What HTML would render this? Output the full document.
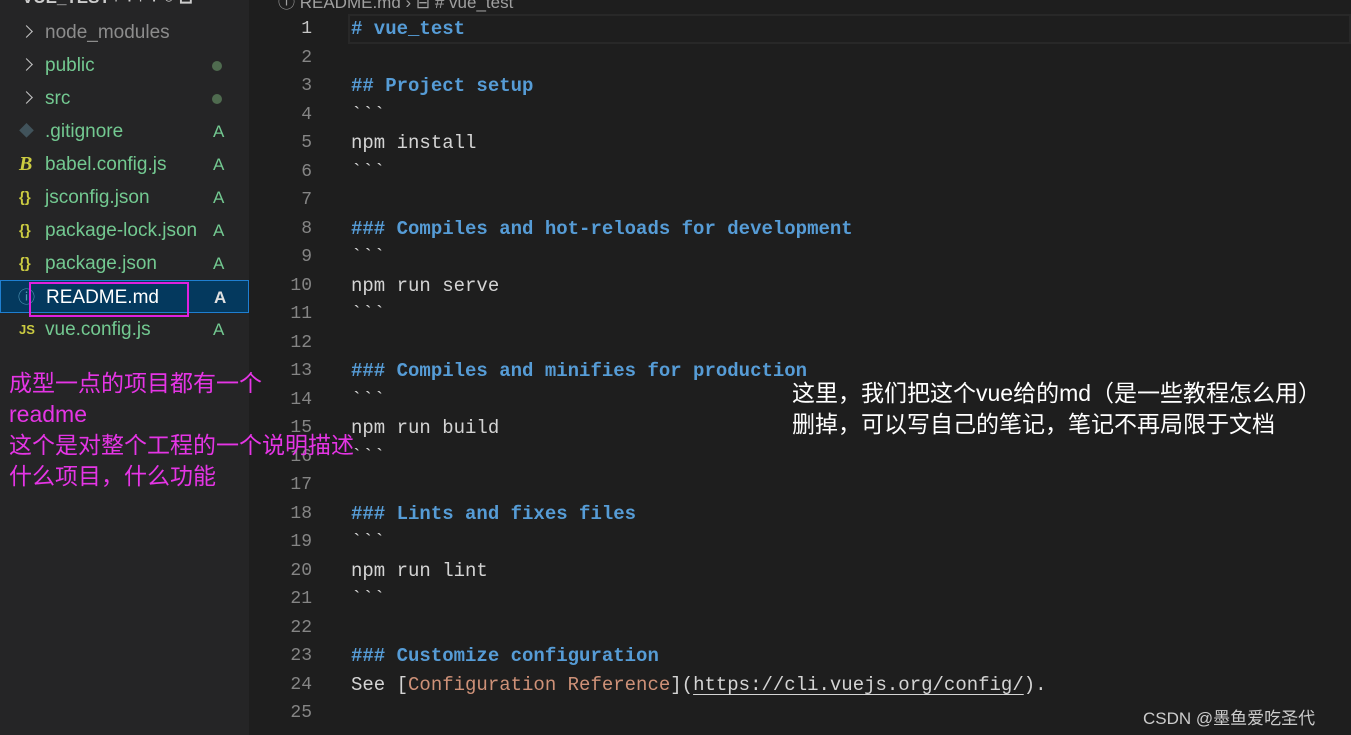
<!DOCTYPE html>
<html><head><meta charset="utf-8"><style>
*{margin:0;padding:0;box-sizing:border-box}
body{width:1351px;height:735px;overflow:hidden;background:#1e1e1e;position:relative;font-family:"Liberation Sans","Noto Sans CJK SC",sans-serif}
#side{position:absolute;left:0;top:0;width:249px;height:735px;background:#252526}
.row{position:absolute;left:0;width:249px;height:33px;font-size:19px;line-height:33px;color:#73c991}
.row .n{position:absolute;left:45px}
.row .b{position:absolute;left:213px;font-size:17px}
.row .d{position:absolute;left:212px;top:12px;width:10px;height:10px;border-radius:50%;background:#4f6b4f}
.row .i{position:absolute;left:19px;font-size:15px;font-weight:bold;color:#cbcb41}
.chev{position:absolute;left:22px;top:11px;width:9px;height:9px;border-right:1.5px solid #c5c5c5;border-top:1.5px solid #c5c5c5;transform:rotate(45deg)}
.ln{position:absolute;left:260px;width:52px;text-align:right;font-family:"Liberation Mono",monospace;font-size:18px;color:#858585;line-height:24px}
.cd{position:absolute;left:351px;font-family:"Liberation Mono",monospace;font-size:19px;color:#d4d4d4;white-space:pre;line-height:24px}
.h{color:#569cd6;font-weight:bold}
.ann{position:absolute;font-size:23px;line-height:31px;white-space:nowrap}
</style></head><body>
<div id="side">
<div style="position:absolute;left:22px;top:-12px;font-size:17px;font-weight:bold;color:#ccc">VUE_TEST ⌐+ ⌐+ ○ ⊟</div>
<div class="row" style="top:16px;color:#8c8c8c"><span class="chev"></span><span class="n">node_modules</span></div>
<div class="row" style="top:49px"><span class="chev"></span><span class="n">public</span><span class="d"></span></div>
<div class="row" style="top:82px"><span class="chev"></span><span class="n">src</span><span class="d"></span></div>
<div class="row" style="top:115px"><span class="i" style="color:#41535b">◆</span><span class="n">.gitignore</span><span class="b">A</span></div>
<div class="row" style="top:148px"><span class="i" style="font-style:italic;font-family:'Liberation Serif',serif;font-size:20px">B</span><span class="n">babel.config.js</span><span class="b">A</span></div>
<div class="row" style="top:181px"><span class="i">{}</span><span class="n">jsconfig.json</span><span class="b">A</span></div>
<div class="row" style="top:214px"><span class="i">{}</span><span class="n">package-lock.json</span><span class="b">A</span></div>
<div class="row" style="top:247px"><span class="i">{}</span><span class="n">package.json</span><span class="b">A</span></div>
<div class="row" style="top:280px;background:#04395e;border:1px solid #1f7fd1;color:#fff"><span class="i" style="color:#519aba;font-weight:normal;font-size:17px;left:17px">ⓘ</span><span class="n">README.md</span><span class="b" style="color:#e0e0e0;font-weight:bold">A</span></div>
<div style="position:absolute;left:29px;top:282px;width:160px;height:35px;border:2px solid #e020e0"></div>
<div class="row" style="top:313px"><span class="i" style="font-size:13px">JS</span><span class="n">vue.config.js</span><span class="b">A</span></div>
</div>
<div style="position:absolute;left:278px;top:-12px;font-size:17px;color:#a0a0a0">ⓘ README.md › ⊟ # vue_test</div>
<div style="position:absolute;left:348px;top:14px;width:1003px;height:30px;border:2px solid #282828"></div>

<div class="ln" style="top:17px;color:#c6c6c6">1</div><div class="cd" style="top:17px"><span class="h"># vue_test</span></div>
<div class="ln" style="top:46px">2</div>
<div class="ln" style="top:74px">3</div><div class="cd" style="top:74px"><span class="h">## Project setup</span></div>
<div class="ln" style="top:103px">4</div><div class="cd" style="top:103px">&#96;&#96;&#96;</div>
<div class="ln" style="top:131px">5</div><div class="cd" style="top:131px">npm install</div>
<div class="ln" style="top:160px">6</div><div class="cd" style="top:160px">&#96;&#96;&#96;</div>
<div class="ln" style="top:188px">7</div>
<div class="ln" style="top:217px">8</div><div class="cd" style="top:217px"><span class="h">### Compiles and hot-reloads for development</span></div>
<div class="ln" style="top:245px">9</div><div class="cd" style="top:245px">&#96;&#96;&#96;</div>
<div class="ln" style="top:274px">10</div><div class="cd" style="top:274px">npm run serve</div>
<div class="ln" style="top:302px">11</div><div class="cd" style="top:302px">&#96;&#96;&#96;</div>
<div class="ln" style="top:331px">12</div>
<div class="ln" style="top:359px">13</div><div class="cd" style="top:359px"><span class="h">### Compiles and minifies for production</span></div>
<div class="ln" style="top:388px">14</div><div class="cd" style="top:388px">&#96;&#96;&#96;</div>
<div class="ln" style="top:416px">15</div><div class="cd" style="top:416px">npm run build</div>
<div class="ln" style="top:445px">16</div><div class="cd" style="top:445px">&#96;&#96;&#96;</div>
<div class="ln" style="top:473px">17</div>
<div class="ln" style="top:502px">18</div><div class="cd" style="top:502px"><span class="h">### Lints and fixes files</span></div>
<div class="ln" style="top:530px">19</div><div class="cd" style="top:530px">&#96;&#96;&#96;</div>
<div class="ln" style="top:559px">20</div><div class="cd" style="top:559px">npm run lint</div>
<div class="ln" style="top:587px">21</div><div class="cd" style="top:587px">&#96;&#96;&#96;</div>
<div class="ln" style="top:616px">22</div>
<div class="ln" style="top:644px">23</div><div class="cd" style="top:644px"><span class="h">### Customize configuration</span></div>
<div class="ln" style="top:673px">24</div><div class="cd" style="top:673px">See [<span style="color:#ce9178">Configuration Reference</span>](<span style="text-decoration:underline;text-underline-offset:4px">https://cli.vuejs.org/config/</span>).</div>
<div class="ln" style="top:701px">25</div>

<div class="ann" style="left:9px;top:368px;color:#e535e5">成型一点的项目都有一个<br>readme<br>这个是对整个工程的一个说明描述<br>什么项目，什么功能</div>
<div class="ann" style="left:792px;top:378px;color:#fff">这里，我们把这个vue给的md（是一些教程怎么用）<br>删掉，可以写自己的笔记，笔记不再局限于文档</div>
<div style="position:absolute;left:1143px;top:704px;font-size:17px;color:#ccc">CSDN @墨鱼爱吃圣代</div>
</body></html>
